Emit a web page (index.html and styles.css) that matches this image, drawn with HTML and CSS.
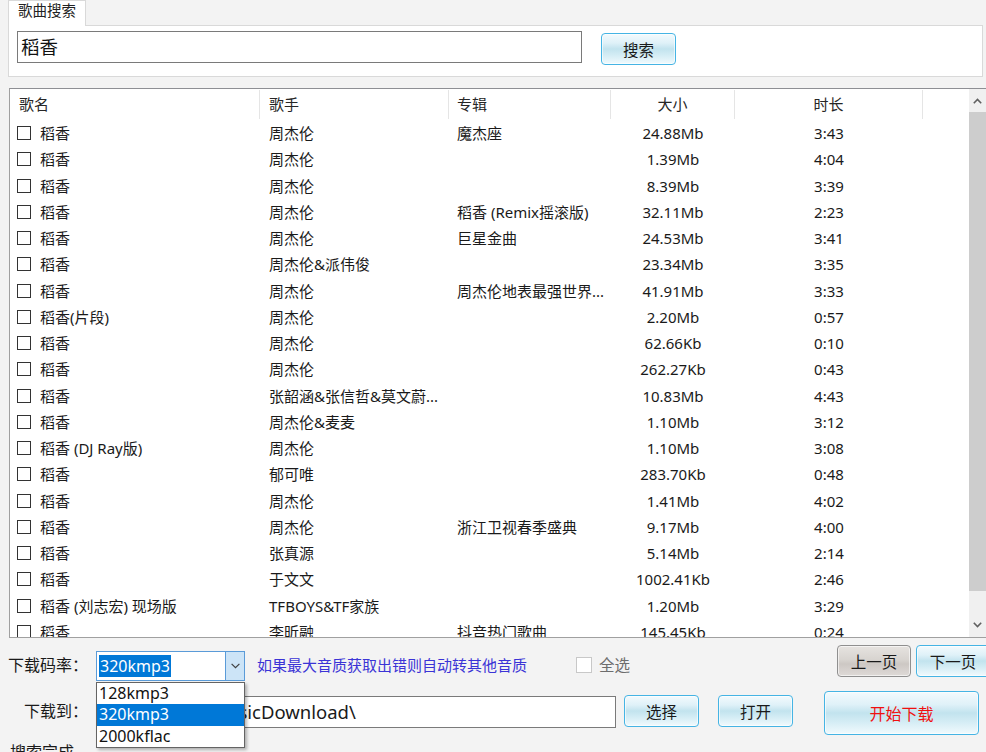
FILE: index.html
```html
<!DOCTYPE html>
<html lang="zh-CN">
<head>
<meta charset="utf-8">
<title>歌曲搜索</title>
<link rel="stylesheet" href="styles.css">
</head>
<body>
<div class="app">
  <div class="tabs"><div class="tab">歌曲搜索</div></div>
  <div class="tabpanel">
    <div class="search-input">稻香</div>
    <button class="btn btn-search">搜索</button>
  </div>

  <div class="list">
    <div class="list-main">
      <div class="thead">
        <div class="th">歌名</div>
        <div class="th">歌手</div>
        <div class="th">专辑</div>
        <div class="th center">大小</div>
        <div class="th center">时长</div>
        <div class="th last"></div>
      </div>
      <div class="tbody">
        <div class="tr"><div class="td name"><span class="cb"></span>稻香</div><div class="td">周杰伦</div><div class="td">魔杰座</div><div class="td center">24.88Mb</div><div class="td center">3:43</div></div>
        <div class="tr"><div class="td name"><span class="cb"></span>稻香</div><div class="td">周杰伦</div><div class="td"></div><div class="td center">1.39Mb</div><div class="td center">4:04</div></div>
        <div class="tr"><div class="td name"><span class="cb"></span>稻香</div><div class="td">周杰伦</div><div class="td"></div><div class="td center">8.39Mb</div><div class="td center">3:39</div></div>
        <div class="tr"><div class="td name"><span class="cb"></span>稻香</div><div class="td">周杰伦</div><div class="td">稻香 (Remix摇滚版)</div><div class="td center">32.11Mb</div><div class="td center">2:23</div></div>
        <div class="tr"><div class="td name"><span class="cb"></span>稻香</div><div class="td">周杰伦</div><div class="td">巨星金曲</div><div class="td center">24.53Mb</div><div class="td center">3:41</div></div>
        <div class="tr"><div class="td name"><span class="cb"></span>稻香</div><div class="td">周杰伦&amp;派伟俊</div><div class="td"></div><div class="td center">23.34Mb</div><div class="td center">3:35</div></div>
        <div class="tr"><div class="td name"><span class="cb"></span>稻香</div><div class="td">周杰伦</div><div class="td">周杰伦地表最强世界...</div><div class="td center">41.91Mb</div><div class="td center">3:33</div></div>
        <div class="tr"><div class="td name"><span class="cb"></span>稻香(片段)</div><div class="td">周杰伦</div><div class="td"></div><div class="td center">2.20Mb</div><div class="td center">0:57</div></div>
        <div class="tr"><div class="td name"><span class="cb"></span>稻香</div><div class="td">周杰伦</div><div class="td"></div><div class="td center">62.66Kb</div><div class="td center">0:10</div></div>
        <div class="tr"><div class="td name"><span class="cb"></span>稻香</div><div class="td">周杰伦</div><div class="td"></div><div class="td center">262.27Kb</div><div class="td center">0:43</div></div>
        <div class="tr"><div class="td name"><span class="cb"></span>稻香</div><div class="td">张韶涵&amp;张信哲&amp;莫文蔚...</div><div class="td"></div><div class="td center">10.83Mb</div><div class="td center">4:43</div></div>
        <div class="tr"><div class="td name"><span class="cb"></span>稻香</div><div class="td">周杰伦&amp;麦麦</div><div class="td"></div><div class="td center">1.10Mb</div><div class="td center">3:12</div></div>
        <div class="tr"><div class="td name"><span class="cb"></span>稻香 (DJ Ray版)</div><div class="td">周杰伦</div><div class="td"></div><div class="td center">1.10Mb</div><div class="td center">3:08</div></div>
        <div class="tr"><div class="td name"><span class="cb"></span>稻香</div><div class="td">郁可唯</div><div class="td"></div><div class="td center">283.70Kb</div><div class="td center">0:48</div></div>
        <div class="tr"><div class="td name"><span class="cb"></span>稻香</div><div class="td">周杰伦</div><div class="td"></div><div class="td center">1.41Mb</div><div class="td center">4:02</div></div>
        <div class="tr"><div class="td name"><span class="cb"></span>稻香</div><div class="td">周杰伦</div><div class="td">浙江卫视春季盛典</div><div class="td center">9.17Mb</div><div class="td center">4:00</div></div>
        <div class="tr"><div class="td name"><span class="cb"></span>稻香</div><div class="td">张真源</div><div class="td"></div><div class="td center">5.14Mb</div><div class="td center">2:14</div></div>
        <div class="tr"><div class="td name"><span class="cb"></span>稻香</div><div class="td">于文文</div><div class="td"></div><div class="td center">1002.41Kb</div><div class="td center">2:46</div></div>
        <div class="tr"><div class="td name"><span class="cb"></span>稻香 (刘志宏) 现场版</div><div class="td">TFBOYS&amp;TF家族</div><div class="td"></div><div class="td center">1.20Mb</div><div class="td center">3:29</div></div>
        <div class="tr"><div class="td name"><span class="cb"></span>稻香</div><div class="td">李昕融</div><div class="td">抖音热门歌曲</div><div class="td center">145.45Kb</div><div class="td center">0:24</div></div>
      </div>
    </div>
    <div class="vscroll">
      <div class="sb-btn sb-up"><svg width="9" height="6" viewBox="0 0 9 6"><polyline points="0.8,5.2 4.5,1.5 8.2,5.2" fill="none" stroke="#606060" stroke-width="1.6"/></svg></div>
      <div class="sb-thumb"></div>
      <div class="sb-track"></div>
      <div class="sb-btn sb-down"><svg width="9" height="6" viewBox="0 0 9 6"><polyline points="0.8,0.8 4.5,4.5 8.2,0.8" fill="none" stroke="#606060" stroke-width="1.6"/></svg></div>
    </div>
  </div>

  <div class="controls">
    <div class="row row1">
      <div class="label">下载码率：</div>
      <div class="combo">
        <div class="combo-text"><span class="sel">320kmp3</span></div>
        <div class="combo-arrow"><svg width="9" height="6" viewBox="0 0 9 6"><polyline points="0.6,0.8 4.5,4.7 8.4,0.8" fill="none" stroke="#404040" stroke-width="1.2"/></svg></div>
        <ul class="dropdown">
          <li>128kmp3</li>
          <li class="active">320kmp3</li>
          <li>2000kflac</li>
        </ul>
      </div>
      <div class="hint">如果最大音质获取出错则自动转其他音质</div>
      <div class="selall"><span class="cb cb-disabled"></span>全选</div>
      <button class="btn btn-prev">上一页</button>
      <button class="btn btn-next">下一页</button>
    </div>
    <div class="row row2">
      <div class="label">下载到：</div>
      <div class="path-input">D:\KuGou\MusicDownload\</div>
      <button class="btn btn-choose">选择</button>
      <button class="btn btn-open">打开</button>
      <button class="btn btn-start">开始下载</button>
    </div>
    <div class="status">搜索完成</div>
  </div>
</div>
</body>
</html>
```

FILE: styles.css
```css
* { box-sizing: border-box; }
html, body { margin: 0; padding: 0; }
body {
  width: 986px;
  height: 752px;
  overflow: hidden;
  background: #f3f3f3;
  font-family: "Noto Sans", "Noto Sans CJK SC", sans-serif;
  font-size: 15px;
  color: #1a1a1a;
}
.app { display: flex; flex-direction: column; height: 752px; }
.app > * { flex-shrink: 0; }

/* tab */
.tabs { height: 25px; padding-left: 8px; display: flex; }
.tab {
  width: 78px;
  height: 26px;
  background: #fff;
  border: 1px solid #d9d9d9;
  border-bottom: none;
  padding-left: 9px;
  line-height: 19px;
  font-size: 14.5px;
  color: #222;
  position: relative;
  z-index: 1;
}
.tabpanel {
  margin: 0 3px 0 8px;
  height: 52px;
  background: #fff;
  border: 1px solid #d9d9d9;
  display: flex;
  align-items: flex-start;
  padding: 5px 0 0 8px;
}
.search-input {
  width: 565px;
  height: 32px;
  border: 1px solid #7a7a7a;
  background: #fff;
  font-size: 18.5px;
  line-height: 29px;
  padding-left: 3px;
  color: #111;
}

/* buttons */
.btn {
  font-family: inherit;
  font-size: 15.5px;
  color: #1a1a1a;
  border: 1px solid #45b4e4;
  border-radius: 4px;
  background: linear-gradient(to bottom, #f3fafd 0%, #dff1f8 30%, #c2e3ee 50%, #d5edf5 72%, #f1fafd 100%);
  box-shadow: inset 0 0 0 1px rgba(255,255,255,0.6);
  padding: 0;
  flex-shrink: 0;
}
.btn-search { width: 75px; height: 32px; margin: 2px 0 0 19px; }

/* list */
.list {
  margin: 11px 0 0 9px;
  height: 550px;
  border-top: 1px solid #8e8f94;
  border-left: 1px solid #a0a0a0;
  border-bottom: 1px solid #a0a0a0;
  background: #fff;
  display: flex;
}
.list-main { flex: 1; overflow: hidden; }
.thead, .tr {
  display: grid;
  grid-template-columns: 250px 189px 162px 124px 188px 1fr;
}
.thead { height: 31px; }
.th {
  padding: 0 0 0 9px;
  line-height: 29px;
  color: #262626;
  border-right: 1px solid #e5e5e5;
  margin: 1px 0 2px;
}
.th:nth-child(3) { padding-left: 8px; }
.th.center { padding: 0; text-align: center; }
.th.last { border-right: none; }
.tbody { height: 517px; overflow: hidden; }
.tr { height: 26.26px; line-height: 26px; }
.td { padding-left: 9px; white-space: nowrap; overflow: hidden; }
.td:nth-child(3) { padding-left: 8px; }
.td.center { padding: 0; text-align: center; }
.td.name { padding-left: 7px; display: flex; align-items: center; }
.cb {
  display: inline-block;
  width: 14px;
  height: 14px;
  border: 1px solid #333;
  background: #fff;
  margin-right: 9px;
  flex-shrink: 0;
}

/* scrollbar */
.vscroll {
  width: 17px;
  background: #f0f0f0;
  display: flex;
  flex-direction: column;
}
.sb-btn { display: flex; align-items: center; justify-content: center; }
.sb-up { height: 23px; }
.sb-thumb { height: 479px; background: #cdcdcd; }
.sb-track { flex: 1; }
.sb-down { height: 24px; }

/* controls */
.controls { padding-top: 7px; }
.row { display: flex; align-items: flex-start; }
.row1 { height: 36px; }
.row2 { height: 44px; margin-top: 10px; }
.label {
  width: 88px;
  text-align: right;
  font-size: 16px;
  line-height: 29px;
  color: #1a1a1a;
  flex-shrink: 0;
}
.row1 .label { margin-top: 6px; }
.row2 .label { margin-top: 6px; }

.combo {
  position: relative;
  margin: 6px 0 0 8px;
  width: 149px;
  height: 30px;
  border: 1px solid #5a9bd8;
  background: #fff;
  display: flex;
  flex-shrink: 0;
}
.combo-text { flex: 1; padding: 3px 0 0 2px; font-size: 16px; line-height: 22px; }
.sel { display: inline-block; background: #0078d7; color: #fff; padding: 0 1px; height: 22px; }
.combo-arrow {
  width: 19px;
  background: #cce4f7;
  border-left: 1px solid #5a9bd8;
  display: flex;
  align-items: center;
  justify-content: center;
}
.dropdown {
  position: absolute;
  top: 30px;
  left: -1px;
  width: 149px;
  margin: 0;
  padding: 0;
  list-style: none;
  background: #fff;
  border: 1px solid #646464;
  box-shadow: 2px 2px 3px rgba(0,0,0,0.28);
  z-index: 5;
}
.dropdown li {
  height: 21.3px;
  line-height: 21px;
  padding-left: 2px;
  font-size: 16px;
  color: #111;
}
.dropdown li.active { background: #0078d7; color: #fff; }

.hint {
  width: 319px;
  margin: 6px 0 0 12px;
  line-height: 29px;
  font-size: 15px;
  color: #3b34d6;
  white-space: nowrap;
  flex-shrink: 0;
}
.selall {
  width: 261px;
  margin-top: 12px;
  display: flex;
  align-items: center;
  font-size: 15.5px;
  color: #6d6d6d;
  line-height: 16px;
  flex-shrink: 0;
}
.cb-disabled { width: 16px; height: 16px; border-color: #c8c8c8; margin-right: 7px; }

.btn-prev {
  width: 74px;
  height: 32px;
  border-color: #8f8f8f;
  background: linear-gradient(to bottom, #e6e3e0 0%, #d8d4d0 45%, #cdc8c4 60%, #dedad7 100%);
}
.btn-next { width: 74px; height: 32px; margin-left: 5px; }

.path-input {
  margin: 5px 0 0 8px;
  width: 520px;
  height: 32px;
  border: 1px solid #7a7a7a;
  background: #fff;
  font-size: 18.5px;
  line-height: 29px;
  padding-left: 22px;
  white-space: nowrap;
  overflow: hidden;
  flex-shrink: 0;
}
.btn-choose { width: 75px; height: 32px; margin: 4px 0 0 8px; }
.btn-open { width: 75px; height: 32px; margin: 4px 0 0 19px; }
.btn-start { width: 155px; height: 44px; margin: 0 0 0 31px; color: #f01010; font-size: 16px; }

.status { padding-left: 10px; margin-top: 6px; font-size: 16px; line-height: 22px; }
```
